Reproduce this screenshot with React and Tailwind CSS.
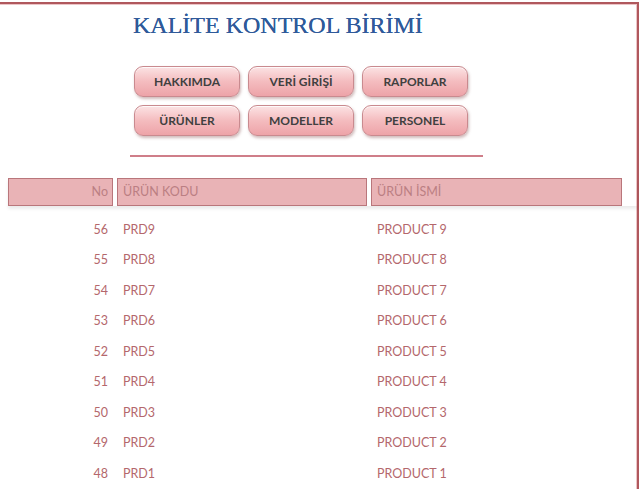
import React from 'react';

const MENU = [
  ['HAKKIMDA', 'VERİ GİRİŞİ', 'RAPORLAR'],
  ['ÜRÜNLER', 'MODELLER', 'PERSONEL'],
];

const ROWS = [56, 55, 54, 53, 52, 51, 50, 49, 48].map((no, i) => ({
  no,
  code: `PRD${9 - i}`,
  name: `PRODUCT ${9 - i}`,
}));

const bodyFont = { fontFamily: 'Lato, "Open Sans", sans-serif' };

function MenuButton({ label }) {
  return (
    <button
      className="h-[31px] w-[106px] rounded-[9px] border border-[#c98a8f] bg-gradient-to-b from-[#fbe3e4] via-[#f4bcbf] to-[#eda3a8] text-[12px] font-bold text-[#404040] shadow-[1px_2px_3px_rgba(120,60,60,0.35),inset_0_1px_0_rgba(255,255,255,0.8)]"
      style={bodyFont}
    >
      {label}
    </button>
  );
}

export default function App() {
  return (
    <div className="h-[489px] w-[641px] overflow-hidden bg-white pt-[2px]">
      <div className="h-[487px] w-[639px] border-r-2 border-t-2 border-[#b0585d] shadow-[inset_-1px_1px_0_#ecc5c7]">
        {/* başlık */}
        <div className="pl-[133px] pt-[6px]">
          <h1
            className="text-[24px] leading-[30px] text-[#2f5a9a] [text-shadow:0_0_0.4px_#2f5a9a]"
            style={{ fontFamily: '"Liberation Serif", "DejaVu Serif", serif' }}
          >
            KALİTE KONTROL BİRİMİ
          </h1>
        </div>

        {/* menü */}
        <div className="mt-[26px] flex flex-col gap-[8px] pl-[134px]">
          {MENU.map((row, i) => (
            <div key={i} className="flex gap-[8px]">
              {row.map((label) => (
                <MenuButton key={label} label={label} />
              ))}
            </div>
          ))}
        </div>

        <div className="ml-[130px] mt-[19px] h-[2px] w-[353px] bg-[#cf7e89]" />

        {/* tablo */}
        <div className="ml-[8px] mt-[21px] text-[12.5px]" style={bodyFont}>
          <div className="flex h-[28px] gap-[4px] text-[#bb7f83] shadow-[0_3px_3px_rgba(0,0,0,0.08)]">
            <div className="flex w-[105px] items-center justify-end border border-[#b9767b] bg-[#e9b3b6] pr-[4px]">No</div>
            <div className="flex w-[250px] items-center border border-[#b9767b] bg-[#e9b3b6] pl-[5px]">ÜRÜN KODU</div>
            <div className="flex w-[251px] items-center border border-[#b9767b] bg-[#e9b3b6] pl-[5px]">ÜRÜN İSMİ</div>
          </div>
          <div className="mt-[9px] text-[#b4676c]">
            {ROWS.map((r) => (
              <div key={r.no} className="flex h-[30.5px] items-center gap-[4px]">
                <div className="w-[105px] pr-[5px] text-right">{r.no}</div>
                <div className="w-[250px] pl-[6px]">{r.code}</div>
                <div className="w-[251px] pl-[6px]">{r.name}</div>
              </div>
            ))}
          </div>
        </div>
      </div>
    </div>
  );
}
